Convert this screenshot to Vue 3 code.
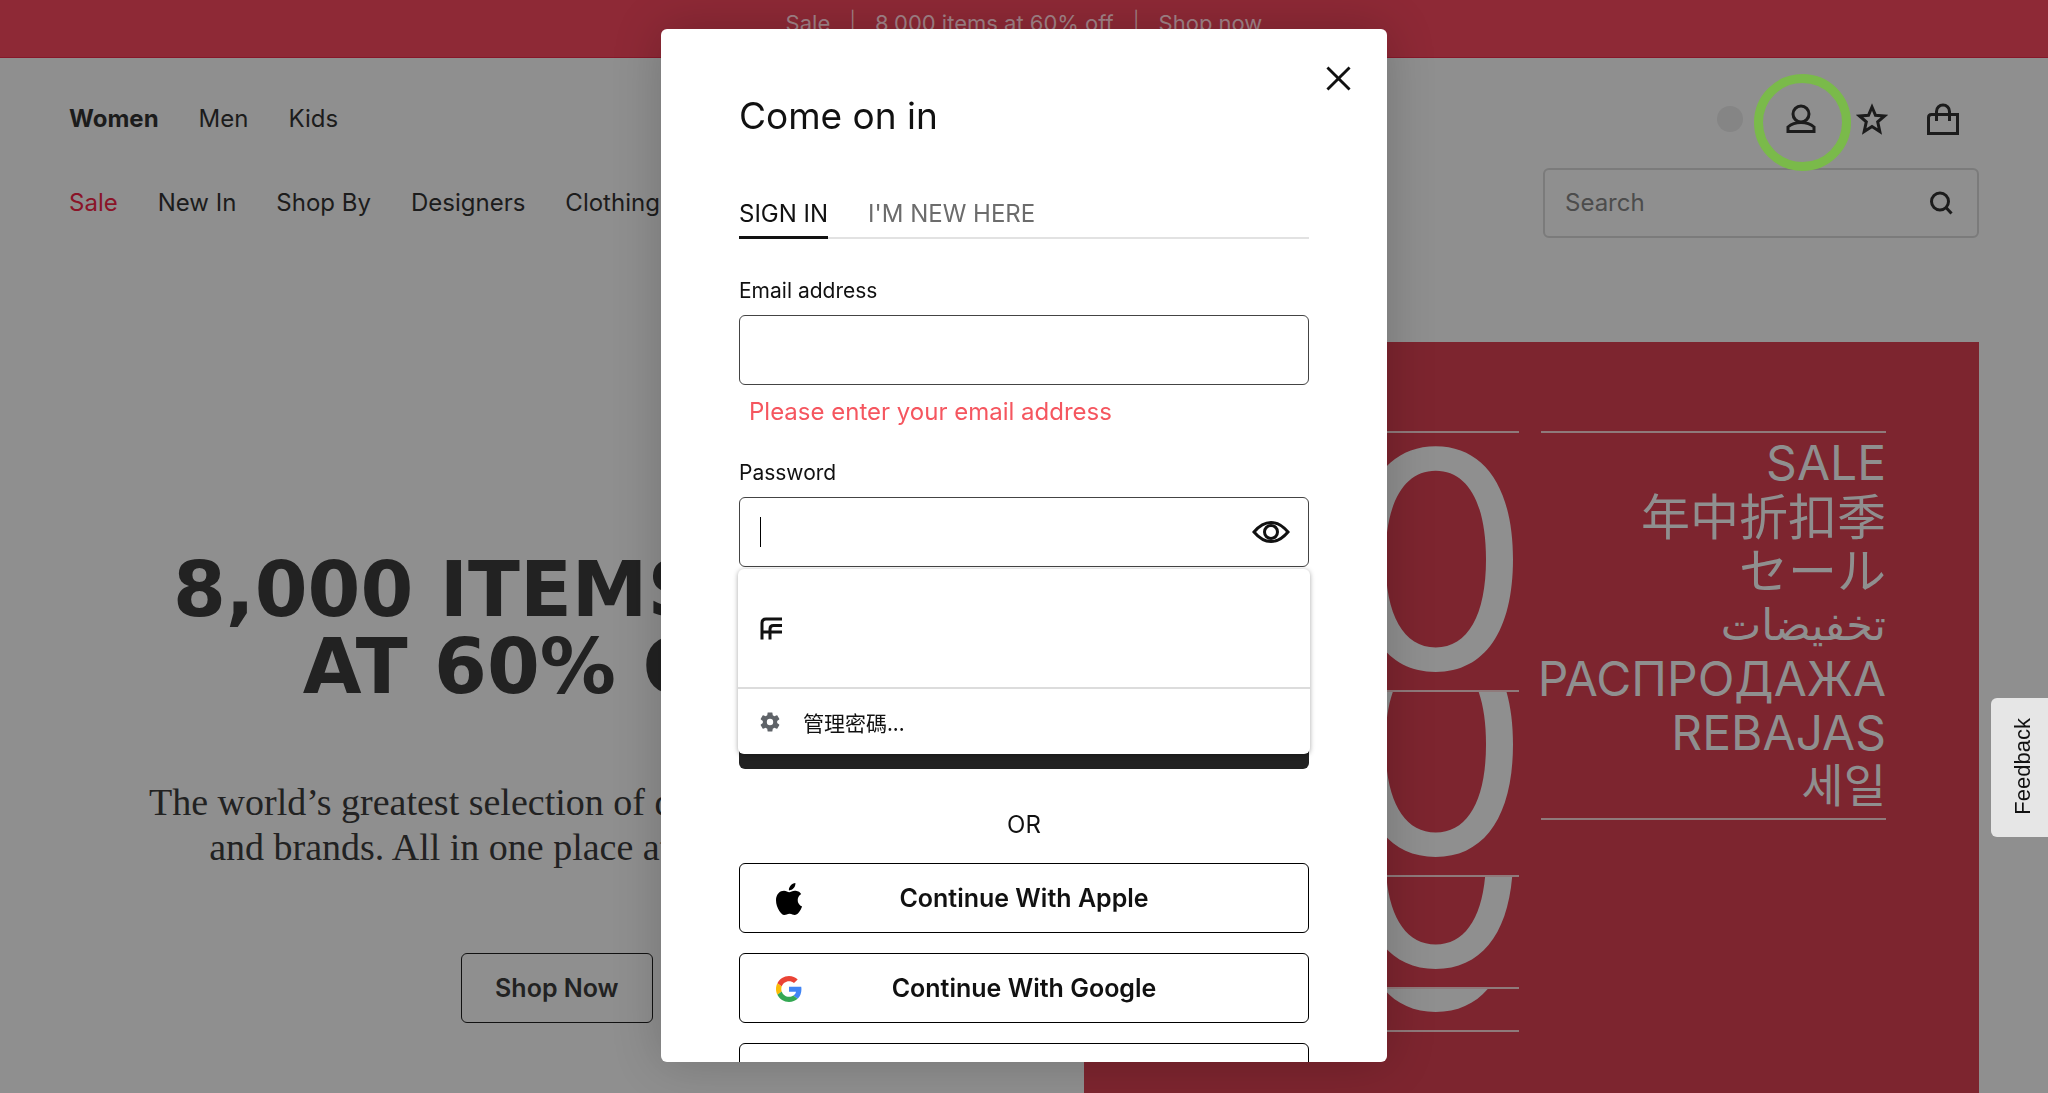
<template>
  <div class="page">
    <p class="promo">
      <a href="#sale">Sale</a>
      <span class="bar">|</span>
      <span>8,000 items at 60% off</span>
      <span class="bar">|</span>
      <a href="#shop">Shop now</a>
    </p>

    <header class="header">
      <div class="header-row">
        <nav class="nav" aria-label="Departments">
          <a
            v-for="dep in departments"
            :key="dep"
            href="#"
            :class="{ active: dep === 'Women' }"
          >{{ dep }}</a>
        </nav>
        <div class="tools">
          <span class="flag"></span>
          <button class="tool account" aria-label="Account">
            <svg viewBox="0 0 32 32" fill="none" stroke="currentColor" stroke-width="3">
              <circle cx="16" cy="11" r="8" />
              <path d="M3 28.500V24Q8 19.500 16 19.500T29 24V28.500Z" />
            </svg>
            <span class="ring"></span>
          </button>
          <button class="tool" aria-label="Wishlist">
            <svg viewBox="0 0 32 32" fill="none" stroke="currentColor" stroke-width="3">
              <path d="M16 4L19.500 12.300L28.500 13L21.700 18.800L23.800 28.500L16 23.500L8.200 28.500L10.300 18.800L3.500 13L12.500 12.300Z" />
            </svg>
          </button>
          <button class="tool" aria-label="Shopping bag">
            <svg viewBox="0 0 32 32" fill="none" stroke="currentColor" stroke-width="3">
              <path d="M1.500 30.500V14.500Q1.500 11.500 4.500 11.500H30.500V30.500Z" />
              <path d="M9.500 18V8.500A6.500 6.500 0 0 1 22.500 8.500V18" />
            </svg>
          </button>
        </div>
      </div>

      <div class="header-row">
        <nav class="nav" aria-label="Categories">
          <a
            v-for="cat in categories"
            :key="cat"
            href="#"
            :class="{ sale: cat === 'Sale' }"
          >{{ cat }}</a>
        </nav>
        <form class="search" @submit.prevent>
          <input v-model="query" type="search" placeholder="Search" aria-label="Search" />
          <button aria-label="Search">
            <svg viewBox="0 0 24 24" fill="none" stroke="currentColor" stroke-width="3">
              <circle cx="11" cy="10.500" r="8.500" />
              <path d="M17 16.500L22.500 22.500" />
            </svg>
          </button>
        </form>
      </div>
    </header>

    <main class="hero">
      <section class="hero-copy">
        <h1>8,000 ITEMS NOW<br />AT 60% OFF</h1>
        <p>The world’s greatest selection of designers, boutiques<br />and brands. All in one place at your fingertips</p>
        <button class="shop-btn">Shop Now</button>
      </section>
      <section class="hero-art">
        <div class="digits">
          <div v-for="n in 4" :key="n" class="digit-row" :class="'cut-' + n"><span>0</span></div>
        </div>
        <ul class="words">
          <li v-for="w in words" :key="w.text" :lang="w.lang">{{ w.text }}</li>
        </ul>
      </section>
    </main>

    <div class="backdrop">
      <div class="modal" role="dialog" aria-labelledby="modal-title">
        <button class="close" aria-label="Close">
          <svg viewBox="0 0 26 26" fill="none" stroke="currentColor" stroke-width="3">
            <path d="M1.500 1.500L24.500 24.500M24.500 1.500L1.500 24.500" />
          </svg>
        </button>
        <h2 id="modal-title">Come on in</h2>

        <div class="tabs" role="tablist">
          <button
            v-for="t in tabs"
            :key="t"
            role="tab"
            :aria-selected="t === tab"
            :class="{ selected: t === tab }"
            @click="tab = t"
          >{{ t }}</button>
        </div>

        <label for="email">Email address</label>
        <input id="email" v-model="email" class="field" type="email" />
        <p class="error">Please enter your email address</p>

        <label for="password">Password</label>
        <div class="password">
          <input id="password" v-model="password" class="field" :type="visible ? 'text' : 'password'" />
          <span v-if="!password" class="caret"></span>
          <button class="eye" aria-label="Show password" @click="visible = !visible">
            <svg viewBox="0 0 38 24" fill="none" stroke="currentColor" stroke-width="3">
              <path d="M2 12Q10 2.500 19 2.500T36 12Q28 21.500 19 21.500T2 12Z" />
              <circle cx="19" cy="12" r="6.500" />
            </svg>
          </button>
          <div class="suggestions">
            <button class="suggestion" aria-label="Saved password">
              <svg class="ff" viewBox="0 0 22 23" fill="none" stroke="currentColor" stroke-width="3">
                <path d="M2 22.500V6Q2 2 6 2H22" />
                <path d="M10 22.500V12Q10 8.500 13.500 8.500H22M2 15H22" />
              </svg>
            </button>
            <button class="manage">
              <svg viewBox="2 2 20 20" fill="currentColor">
                <path d="M19.140 12.940c.04-.3.06-.61.06-.94 0-.32-.02-.64-.07-.94l2.030-1.580c.18-.14.23-.41.12-.61l-1.920-3.320c-.12-.22-.37-.29-.59-.22l-2.390.96c-.5-.38-1.030-.7-1.620-.94l-.36-2.540c-.04-.24-.24-.41-.48-.41h-3.840c-.24 0-.43.17-.47.41l-.36 2.540c-.59.24-1.130.57-1.620.94l-2.390-.96c-.22-.08-.47 0-.59.22L2.740 8.870c-.12.21-.08.47.12.61l2.030 1.580c-.05.3-.09.63-.09.94s.02.64.07.94l-2.030 1.580c-.18.14-.23.41-.12.61l1.920 3.320c.12.22.37.29.59.22l2.390-.96c.5.38 1.030.7 1.620.94l.36 2.540c.05.24.24.41.48.41h3.840c.24 0 .44-.17.47-.41l.36-2.540c.59-.24 1.130-.56 1.620-.94l2.390.96c.22.08.47 0 .59-.22l1.920-3.320c.12-.22.07-.47-.12-.61l-2.010-1.580zM12 15.200A3.200 3.200 0 1 1 12 8.800a3.200 3.200 0 0 1 0 6.400z" />
              </svg>
              <span lang="zh-Hant">管理密碼...</span>
            </button>
          </div>
        </div>

        <button class="submit" aria-label="Sign in"></button>
        <p class="or">OR</p>

        <div class="providers">
          <button>
            <svg class="apple" viewBox="0 0 814 1000" fill="currentColor">
              <path d="M788.100 340.900c-5.800 4.500-108.200 62.200-108.200 190.500 0 148.400 130.300 200.900 134.200 202.200-.6 3.200-20.700 71.900-68.700 141.900-42.800 61.600-87.500 123.100-155.500 123.100s-85.500-39.500-164-39.500c-76.500 0-103.700 40.800-165.900 40.800s-105.600-57-155.500-127C46.700 790.700 0 663 0 541.800c0-194.400 126.400-297.500 250.800-297.500 66.100 0 121.200 43.400 162.700 43.400 39.500 0 101.100-46 176.300-46 28.500 0 130.900 2.600 198.300 99.200zm-234-181.500c31.100-36.900 53.100-88.100 53.100-139.300 0-7.100-.6-14.300-1.900-20.100-50.600 1.900-110.800 33.700-147.100 75.800-28.500 32.400-55.100 83.600-55.100 135.500 0 7.800 1.300 15.600 1.900 18.100 3.200.6 8.400 1.300 13.600 1.300 45.400 0 102.500-30.400 135.500-71.300z" />
            </svg>
            Continue With Apple
          </button>
          <button>
            <svg viewBox="0 0 48 48">
              <path fill="#ea4335" d="M24 9.500c3.540 0 6.710 1.220 9.210 3.600l6.850-6.850C35.900 2.380 30.470 0 24 0 14.620 0 6.510 5.380 2.560 13.220l7.980 6.190C12.430 13.720 17.740 9.500 24 9.500z" />
              <path fill="#4285f4" d="M46.980 24.550c0-1.570-.15-3.090-.38-4.550H24v9.020h12.940c-.58 2.960-2.260 5.480-4.780 7.180l7.730 6c4.510-4.180 7.090-10.360 7.090-17.650z" />
              <path fill="#fbbc05" d="M10.530 28.590c-.48-1.450-.76-2.990-.76-4.590s.27-3.140.76-4.590l-7.980-6.190C.92 16.460 0 20.120 0 24c0 3.880.92 7.540 2.560 10.780l7.970-6.190z" />
              <path fill="#34a853" d="M24 48c6.480 0 11.930-2.130 15.890-5.810l-7.730-6c-2.150 1.450-4.920 2.300-8.160 2.300-6.260 0-11.570-4.220-13.470-9.910l-7.980 6.190C6.510 42.620 14.620 48 24 48z" />
            </svg>
            Continue With Google
          </button>
          <button aria-label="More options"></button>
        </div>
      </div>
    </div>

    <button class="feedback"><span>Feedback</span></button>
  </div>
</template>

<script setup>
import { ref } from 'vue'

const departments = ['Women', 'Men', 'Kids']
const categories = ['Sale', 'New In', 'Shop By', 'Designers', 'Clothing']
const words = [
  { lang: 'en', text: 'SALE' },
  { lang: 'zh', text: '年中折扣季' },
  { lang: 'ja', text: 'セール' },
  { lang: 'ar', text: 'تخفيضات' },
  { lang: 'ru', text: 'РАСПРОДАЖА' },
  { lang: 'es', text: 'REBAJAS' },
  { lang: 'ko', text: '세일' }
]
const tabs = ['SIGN IN', "I'M NEW HERE"]

const tab = ref('SIGN IN')
const query = ref('')
const email = ref('')
const password = ref('')
const visible = ref(false)
</script>

<style>
body {
  margin: 0;
  background: #8f8f8f;
}
</style>

<style scoped>
* { box-sizing: border-box; }

.page {
  height: 100vh;
  overflow: hidden;
  background: #8f8f8f;
  color: #1c1c1c;
  font-family: Inter, "Liberation Sans", sans-serif;
  font-size: 24px;
  line-height: 32px;
}

a { color: inherit; text-decoration: none; }
h1, h2, p, ul { margin: 0; padding: 0; }
svg { display: block; }
button {
  padding: 0;
  border: none;
  background: none;
  color: inherit;
  font: inherit;
  cursor: pointer;
}

.promo {
  display: flex;
  justify-content: center;
  gap: 19px;
  height: 58px;
  padding-top: 9px;
  background: #8e2936;
  border-bottom: 1px solid #86182a;
  color: #a28388;
  font-size: 22px;
  line-height: 28px;
}
.promo .bar { font-weight: 300; }

/* header */
.header {
  display: flex;
  flex-direction: column;
  gap: 33px;
  padding: 45px 69px 0;
}
.header-row { display: flex; justify-content: space-between; align-items: center; }
.nav { display: flex; gap: 40px; }
.nav .active { font-weight: 700; }
.nav .sale { color: #8a1428; }

.tools { display: flex; align-items: center; gap: 39px; padding-right: 20px; }
.flag { width: 26px; height: 26px; margin: 0 3px; border-radius: 50%; background: #858585; }
.tool { position: relative; width: 32px; height: 32px; }
.ring {
  position: absolute;
  top: 50%;
  left: 50%;
  width: 97px;
  height: 97px;
  margin: -45px 0 0 -47px;
  border: 9px solid #7aba4a;
  border-radius: 50%;
}

.search {
  display: flex;
  align-items: center;
  width: 436px;
  height: 70px;
  padding: 0 24px 0 20px;
  border: 2px solid #7b7b7b;
  border-radius: 6px;
}
.search input {
  flex: 1;
  min-width: 0;
  padding: 0;
  border: none;
  outline: none;
  background: none;
  color: #1c1c1c;
  font: inherit;
}
.search input::placeholder { color: #4c4c4c; opacity: 1; }
.search svg { width: 24px; height: 24px; }

/* hero */
.hero {
  display: grid;
  grid-template-columns: minmax(0, 17fr) minmax(0, 15fr);
  padding: 104px 69px 0;
}
.hero-copy {
  display: flex;
  flex-direction: column;
  align-items: center;
  padding: 209px 39px 0 0;
  color: #222;
  text-align: center;
  white-space: nowrap;
}
.hero-copy h1 {
  font-family: "DejaVu Sans", sans-serif;
  font-size: 76px;
  font-weight: 700;
  line-height: 77px;
}
.hero-copy p {
  margin-top: 75px;
  font-family: "Liberation Serif", serif;
  font-size: 38px;
  line-height: 45px;
}
.shop-btn {
  height: 70px;
  margin-top: 83px;
  padding: 0 33px;
  border: 1px solid #111;
  border-radius: 6px;
  font-size: 25px;
  font-weight: 600;
}

.hero-art {
  display: grid;
  grid-template-columns: minmax(0, 1fr) 345px;
  align-items: start;
  gap: 22px;
  height: 900px;
  padding: 89px 93px 0;
  background: #7d252f;
  color: #8f8f8f;
}
.digits { border-top: 2px solid #8f7a7b; }
.digit-row {
  display: flex;
  justify-content: flex-end;
  align-items: flex-end;
  overflow: hidden;
  padding-bottom: 18px;
  border-bottom: 2px solid #8f7a7b;
  font-size: 302px;
  line-height: 226px;
}
.digit-row span { flex: none; margin-right: -12px; }
.cut-1 { height: 259px; }
.cut-2 { height: 185px; }
.cut-3 { height: 112px; }
.cut-4 { height: 43px; }

.words {
  padding: 3px 0 4px;
  border-top: 2px solid #8f7a7b;
  border-bottom: 2px solid #8f7a7b;
  list-style: none;
  font-size: 48px;
  text-align: right;
  white-space: nowrap;
}
.words li { display: flex; justify-content: flex-end; height: 54px; line-height: 54px; }
.words li:lang(zh),
.words li:lang(ja),
.words li:lang(ko) { font-size: 49px; line-height: 48px; }
.words li:lang(zh) { font-family: "Noto Sans CJK SC", sans-serif; }
.words li:lang(ja) { font-family: "Noto Sans CJK JP", sans-serif; }
.words li:lang(ko) { font-family: "Noto Sans CJK KR", sans-serif; font-size: 46px; line-height: 44px; }
.words li:lang(ar) { font-family: "DejaVu Sans", sans-serif; font-size: 43px; }

/* sign-in dialog */
.backdrop {
  position: fixed;
  inset: 0;
  display: flex;
  justify-content: center;
  align-items: flex-start;
  padding: 29px 20px 31px;
}
.modal {
  position: relative;
  width: 100%;
  max-width: 726px;
  height: 100%;
  overflow: hidden;
  padding: 63px 78px 0;
  border-radius: 6px;
  background: #fff;
  box-shadow: 0 0 50px rgba(0, 0, 0, 0.2);
  color: #111;
}
.close { position: absolute; top: 37px; right: 36px; }
.close svg { width: 25px; height: 25px; }
.modal h2 { font-size: 37px; font-weight: 400; line-height: 48px; }

.tabs {
  display: flex;
  gap: 40px;
  margin: 58px 0 38px;
  box-shadow: inset 0 -2px #e2e2e2;
}
.tabs button {
  padding-bottom: 6px;
  border-bottom: 3px solid transparent;
  color: #6c6c6c;
}
.tabs .selected { border-color: #111; color: #111; }

label { display: block; font-size: 21px; line-height: 28px; margin-bottom: 10px; }
.field {
  display: block;
  width: 100%;
  height: 70px;
  padding: 0 20px;
  border: 1px solid #444;
  border-radius: 6px;
  outline: none;
  background: #fff;
  font: inherit;
}
.error { margin: 11px 0 31px; padding-left: 10px; color: #f5565f; }

.password { position: relative; }
.caret { position: absolute; top: 20px; left: 21px; width: 1px; height: 30px; background: #000; }
.eye { position: absolute; top: 23px; right: 19px; }
.eye svg { width: 38px; height: 24px; }

.suggestions {
  position: absolute;
  top: 72px;
  left: -1px;
  right: -1px;
  border-radius: 6px;
  background: #fff;
  box-shadow: 0 1px 5px rgba(0, 0, 0, 0.35);
}
.suggestions button { display: flex; align-items: center; width: 100%; padding: 0 22px; }
.suggestion { height: 120px; border-bottom: 2px solid #dcdcdc; }
.ff { width: 22px; height: 23px; }
.suggestions .manage {
  gap: 23px;
  height: 65px;
  font-family: "Noto Sans CJK TC", sans-serif;
  font-size: 21px;
}
.manage svg { width: 20px; height: 20px; color: #5f6368; }

.submit { display: block; width: 100%; height: 70px; margin-top: 132px; border-radius: 6px; background: #222; }
.or { margin: 40px 0 22px; text-align: center; }

.providers { display: flex; flex-direction: column; gap: 20px; }
.providers button {
  position: relative;
  flex: none;
  height: 70px;
  border: 1px solid #000;
  border-radius: 6px;
  font-size: 25px;
  font-weight: 600;
}
.providers svg { position: absolute; top: 22px; left: 36px; width: 26px; height: 26px; }
.providers .apple { top: 19px; height: 32px; color: #000; }

.feedback {
  position: fixed;
  top: 698px;
  right: 0;
  width: 57px;
  height: 139px;
  padding: 6px 0 0 7px;
  border-radius: 6px 0 0 6px;
  background: #e6e6e6;
  color: #111;
  font-family: "Liberation Sans", sans-serif;
  font-size: 22px;
}
.feedback span { writing-mode: vertical-rl; transform: rotate(180deg); }
</style>
